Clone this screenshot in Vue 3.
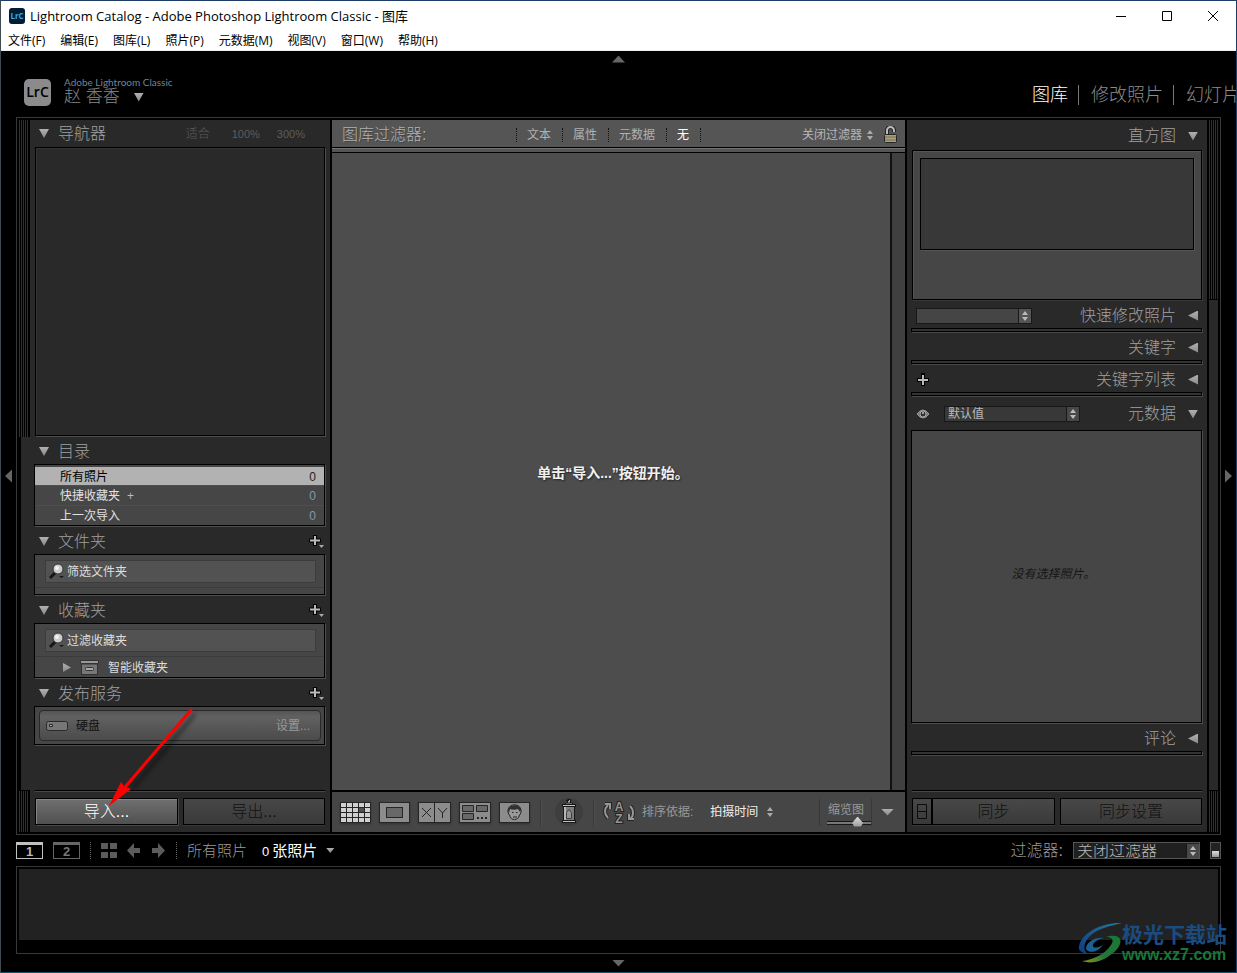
<script setup>
import { ref } from 'vue'

const menus = ['文件(F)', '编辑(E)', '图库(L)', '照片(P)', '元数据(M)', '视图(V)', '窗口(W)', '帮助(H)']
const modules = ['图库', '修改照片', '幻灯片']
const catalog = [
  { name: '所有照片', count: 0 },
  { name: '快捷收藏夹', plus: true, count: 0 },
  { name: '上一次导入', count: 0 }
]
const filters = ['文本', '属性', '元数据', '无']
const collapsed = [
  { title: '快速修改照片', kind: 'preset' },
  { title: '关键字', kind: 'plain' },
  { title: '关键字列表', kind: 'add' }
]
const selected = ref(0)
const activeFilter = ref(3)
const thumb = ref(76)
const folderQuery = ref('')
const collectionQuery = ref('')
</script>

<template>
  <div class="window">
    <header class="titlebar">
      <span class="appicon">LrC</span>
      <h1>Lightroom Catalog - Adobe Photoshop Lightroom Classic - 图库</h1>
      <div class="controls">
        <button aria-label="最小化"><svg width="10" height="10"><path d="M0 5.500h10" /></svg></button>
        <button aria-label="最大化"><svg width="10" height="10"><path d="M.5.5h9v9h-9z" /></svg></button>
        <button aria-label="关闭"><svg width="10" height="10"><path d="M0 0l10 10M10 0L0 10" /></svg></button>
      </div>
    </header>
    <nav class="menubar">
      <button v-for="m in menus" :key="m">{{ m }}</button>
    </nav>

    <div class="identity">
      <button class="edge top" aria-label="隐藏模块选取器"><i class="tri up"></i></button>
      <span class="logo">LrC</span>
      <div class="user">
        <span class="product">Adobe Lightroom Classic</span>
        <button class="name">赵 香香 <i class="tri down"></i></button>
      </div>
      <nav class="modules">
        <a v-for="(m, i) in modules" :key="m" href="#" :class="{ on: i === 0 }">{{ m }}</a>
      </nav>
    </div>

    <div class="middle">
      <button class="side" aria-label="隐藏左侧面板"><i class="tri left"></i></button>
      <main class="frame">
        <aside class="column">
          <div class="gutter lefty"><i class="stripes a"></i><i class="mid"></i><i class="stripes c"></i></div>
          <div class="panel">
            <h2 class="head nav"><i class="tri down"></i><span>导航器</span>
              <span class="zooms"><button>适合</button><button>100%</button><button>300%</button></span>
            </h2>
            <div class="box preview"></div>

            <h2 class="head"><i class="tri down"></i><span>目录</span></h2>
            <ul class="box catalog">
              <li v-for="(c, i) in catalog" :key="c.name">
                <button :class="{ on: i === selected }" @click="selected = i">
                  <span>{{ c.name }}<b v-if="c.plus">+</b></span><em>{{ c.count }}</em>
                </button>
              </li>
            </ul>

            <h2 class="head"><i class="tri down"></i><span>文件夹</span>
              <button class="plus" aria-label="添加文件夹"><svg width="16" height="16"><path class="ol" d="M6 1v11M0 6.500h12" /><path class="in" d="M6 2v9M1 6.500h10" /><path class="fl" d="M10 11h5l-2.500 3z" /></svg></button>
            </h2>
            <div class="box folders">
              <label class="search">
                <svg width="18" height="18"><path d="M2 15l6-6" stroke="#161616" stroke-width="3" /><circle cx="10" cy="6" r="5" fill="#ccc" stroke="#333" /><circle cx="9" cy="5" r="2" fill="#f4f4f4" /><path d="M11 13h5l-2.500 2z" fill="#161616" /></svg>
                <input v-model="folderQuery" type="text" placeholder="筛选文件夹" aria-label="筛选文件夹">
              </label>
            </div>

            <h2 class="head"><i class="tri down"></i><span>收藏夹</span>
              <button class="plus" aria-label="添加收藏夹"><svg width="16" height="16"><path class="ol" d="M6 1v11M0 6.500h12" /><path class="in" d="M6 2v9M1 6.500h10" /><path class="fl" d="M10 11h5l-2.500 3z" /></svg></button>
            </h2>
            <div class="box collections">
              <label class="search">
                <svg width="18" height="18"><path d="M2 15l6-6" stroke="#161616" stroke-width="3" /><circle cx="10" cy="6" r="5" fill="#ccc" stroke="#333" /><circle cx="9" cy="5" r="2" fill="#f4f4f4" /><path d="M11 13h5l-2.500 2z" fill="#161616" /></svg>
                <input v-model="collectionQuery" type="text" placeholder="过滤收藏夹" aria-label="过滤收藏夹">
              </label>
              <button class="smart">
                <i class="tri right"></i>
                <svg width="19" height="15"><path d="M1.500 4h16v10.500h-16z" fill="#777" stroke="#333" /><path d="M.5.5h18v3h-18z" fill="#999" stroke="#333" /><rect x="5.500" y="7.500" width="8" height="3" rx="1" fill="#aaa" stroke="#333" /></svg>
                <span>智能收藏夹</span>
              </button>
            </div>

            <h2 class="head"><i class="tri down"></i><span>发布服务</span>
              <button class="plus" aria-label="添加发布服务"><svg width="16" height="16"><path class="ol" d="M6 1v11M0 6.500h12" /><path class="in" d="M6 2v9M1 6.500h10" /><path class="fl" d="M10 11h5l-2.500 3z" /></svg></button>
            </h2>
            <div class="box publish">
              <button class="disk">
                <svg width="22" height="10"><rect x=".5" y=".5" width="21" height="9" rx="2" fill="#777" stroke="#2a2a2a" /><path d="M3.500 3.500h3v2h-3z" fill="#aaa" stroke="#2a2a2a" /></svg>
                <span>硬盘</span><em>设置...</em>
              </button>
            </div>

            <footer class="actions">
              <button class="import">导入...</button>
              <button disabled>导出...</button>
            </footer>
          </div>
        </aside>

        <section class="center">
          <div class="filterbar">
            <h2>图库过滤器:</h2>
            <div class="tabs">
              <button v-for="(f, i) in filters" :key="f" :class="{ on: i === activeFilter }" @click="activeFilter = i">{{ f }}</button>
            </div>
            <label class="pick off">
              <select aria-label="过滤器预设"><option>关闭过滤器</option></select>
              <svg width="8" height="10"><path d="M1 4l3-4 3 4zM1 6l3 4 3-4z" /></svg>
            </label>
            <button class="lock" aria-label="锁定过滤器">
              <svg width="16" height="18"><path d="M4 9V4.500a3.500 3.500 0 0 1 7 0V6" fill="none" stroke="#222" stroke-width="4" /><path d="M4 9V4.500a3.500 3.500 0 0 1 7 0V6" fill="none" stroke="#bbb" stroke-width="2" /><rect x="1.500" y="8.500" width="12" height="8" rx="1" fill="#aaa17c" stroke="#252525" /><path d="M2 11h11M2 14h11" stroke="#746e57" /></svg>
            </button>
          </div>
          <div class="stage">
            <p>单击“导入...”按钮开始。</p>
            <i class="scroll"></i>
          </div>
          <div class="toolbar">
            <button class="view" aria-label="网格视图">
              <svg width="31" height="21"><path fill="#252525" d="M0 0h31v21H0z" /><path d="M1 3h29M1 8h29M1 13h29M1 18h29" stroke="#d0d0d0" stroke-width="4" stroke-dasharray="5 1" /><path d="M19 6h5v4h-5z" fill="#505050" /></svg>
            </button>
            <button class="view" aria-label="放大视图">
              <svg width="31" height="21"><rect class="tile" x=".5" y=".5" width="30" height="20" /><rect x="7.500" y="5.500" width="16" height="10" fill="#686868" stroke="#252525" /></svg>
            </button>
            <button class="view" aria-label="比较视图">
              <svg width="33" height="21"><rect class="tile" x=".5" y=".5" width="32" height="20" /><path d="M16.500 0v21M4 6l9 9M13 6l-9 9M20 6l4.500 5 4.500-5M24.500 11v5" fill="none" stroke="#252525" /></svg>
            </button>
            <button class="view" aria-label="筛选视图">
              <svg width="32" height="21"><rect class="tile" x=".5" y=".5" width="31" height="20" /><path d="M3.500 3.500h11v6h-11zM17.500 3.500h11v6h-11zM3.500 11.500h11v6h-11z" fill="#686868" stroke="#252525" /><path d="M18 16h10" stroke="#252525" stroke-width="2" stroke-dasharray="2 2" /></svg>
            </button>
            <button class="view" aria-label="人物视图">
              <svg width="31" height="21"><rect class="tile" x=".5" y=".5" width="30" height="20" /><path d="M9 8c1-7 12-7 13 0 .5 2-.5 4-1.500 5-1 6-9 6-10 0-1-1-2-3-1.500-5z" fill="#999" stroke="#252525" /><path d="M9 9c0-7 12-8 13-1l-1 2-2-3c-3 1-6 1-8 0l-1 4z" fill="#303030" /><path d="M13 10.500h1.500M17 10.500h1.500M14 15h4" stroke="#252525" fill="none" /></svg>
            </button>
            <i class="rule r1"></i>
            <button class="spray" aria-label="喷涂">
              <svg width="30" height="30"><circle cx="15" cy="15" r="14" fill="#3e3e3e" /><path d="M13.500 2.500h3v4h-3z" fill="#aaa" stroke="#151515" /><path d="M12 3.500h3" stroke="#151515" /><path d="M10.500 9q0-3 2-3h5q2 0 2 3z" fill="#aaa" stroke="#181818" /><path d="M9.500 9.500h11v15h-11z" fill="#7c7c7c" stroke="#181818" /><path d="M11 10v14" stroke="#b4b4b4" stroke-width="2" /><path d="M8 8.500h14M8 24.500h14" stroke="#181818" stroke-width="3" /><path d="M9 8.500h12M9 24.500h12" stroke="#c0c0c0" /><path d="M12.500 21.500v-6l2.500-3 2.500 3v6z" fill="#929292" stroke="#404040" /></svg>
            </button>
            <i class="rule r2"></i>
            <button class="sort" aria-label="排序方向">
              <svg width="32" height="28">
                <path d="M5 20C1 16 1 11 5 7M2 6h5v5M27 21c4-3 4-9 0-13M31 21h-5v-5" class="so" />
                <path d="M5 20C1 16 1 11 5 7M2 6h5v5M27 21c4-3 4-9 0-13M31 21h-5v-5" class="si" />
                <text x="16" y="13">A</text><text x="16" y="25">Z</text>
              </svg>
            </button>
            <label class="pick sortby"><span>排序依据:</span>
              <select><option>拍摄时间</option></select>
              <svg width="8" height="10"><path d="M1 4l3-4 3 4zM1 6l3 4 3-4z" /></svg>
            </label>
            <label class="thumbs"><span>缩览图</span><input v-model="thumb" type="range" min="0" max="100"></label>
            <button class="more" aria-label="工具栏选项"><i class="tri wide"></i></button>
          </div>
        </section>

        <aside class="column">
          <div class="panel righty">
            <h2 class="head hist"><i class="tri down"></i><span>直方图</span></h2>
            <div class="box histogram"><div></div></div>
            <template v-for="c in collapsed" :key="c.title">
              <h2 class="head">
                <i class="tri left"></i><span>{{ c.title }}</span>
                <label v-if="c.kind === 'preset'" class="drop preset"><select aria-label="存储的预设"><option></option></select><svg width="13" height="14"><path d="M3 6l3-4 3 4zM3 8l3 4 3-4z" /></svg></label>
                <button v-if="c.kind === 'add'" class="add" aria-label="添加关键字"><svg width="13" height="13"><path class="ol" d="M7 0v13M1 7h12" /><path class="in" d="M7 2v10M2 7h10" /></svg></button>
              </h2>
              <i class="bar"></i>
            </template>
            <h2 class="head meta"><i class="tri down"></i><span>元数据</span>
              <label class="drop metaset"><select aria-label="元数据预设"><option>默认值</option></select><svg width="13" height="14"><path d="M3 6l3-4 3 4zM3 8l3 4 3-4z" /></svg></label>
              <button class="eye" aria-label="显示元数据"><svg width="14" height="12"><path d="M1 6q6-8 12 0-6 8-12 0z" fill="#777" stroke="#999" /><circle cx="7" cy="6" r="3" fill="#333" stroke="#aaa" /><circle cx="7" cy="5" r="1" fill="#bbb" /></svg></button>
            </h2>
            <div class="box metadata"><p>没有选择照片。</p></div>
            <h2 class="head"><i class="tri left"></i><span>评论</span></h2>
            <i class="bar"></i>
            <footer class="actions">
              <div class="pair">
                <button disabled aria-label="自动同步开关"><svg width="10" height="15"><path d="M.5.5h9v14h-9zM.5 7.500h9" fill="none" stroke="#0c0c0c" /></svg></button>
                <button disabled>同步</button>
              </div>
              <button disabled>同步设置</button>
            </footer>
          </div>
          <div class="gutter"><i class="stripes b"></i><i class="mid"></i><i class="stripes c"></i></div>
        </aside>
      </main>
      <button class="side" aria-label="隐藏右侧面板"><i class="tri goright"></i></button>
    </div>

    <div class="stripbar">
      <button class="monitor on">1</button>
      <button class="monitor">2</button>
      <i class="dots"></i>
      <button aria-label="返回网格"><svg width="16" height="16"><path d="M0 0h7v6H0zM9 0h7v6H9zM0 9h7v6H0zM9 9h7v6H9z" /></svg></button>
      <button class="back" aria-label="后退"><svg width="14" height="16"><path d="M0 7.500L7 0v5h6v5H7v5z" /></svg></button>
      <button class="back" aria-label="前进"><svg width="14" height="16"><path d="M14 7.500L7 0v5H1v5h6v5z" /></svg></button>
      <i class="dots"></i>
      <button class="source"><span>所有照片</span><b><small>0</small>张照片</b><i class="tri tiny"></i></button>
      <label class="stripfilter"><span>过滤器:</span>
        <span class="drop dark"><select><option>关闭过滤器</option></select><svg width="13" height="14"><path d="M3 6l3-4 3 4zM3 8l3 4 3-4z" /></svg></span>
      </label>
      <button class="switch" aria-label="开关过滤器"><i></i></button>
    </div>
    <div class="filmstrip"><div></div></div>
    <button class="edge bottom" aria-label="隐藏胶片显示窗格"><i class="tri wide"></i></button>

    <svg class="pointer" width="110" height="120" viewBox="0 0 110 120">
      <path class="shade" d="M95 14L32 89" />
      <path d="M91 10L26 86" fill="none" stroke="#f00" stroke-width="3" stroke-linecap="round" />
      <path d="M9 106l12-24 3 4 7 3z" fill="#f00" />
    </svg>

    <div class="watermark">
      <svg width="44" height="42" viewBox="0 0 44 42">
        <defs>
          <linearGradient id="wb" x1="1" y1="0" x2="0" y2="1"><stop offset="0" stop-color="#217b9d" /><stop offset="1" stop-color="#113a80" /></linearGradient>
          <linearGradient id="wg" x1="1" y1="0" x2="0" y2="1"><stop offset="0" stop-color="#187a35" /><stop offset=".6" stop-color="#25733b" /><stop offset="1" stop-color="#91941a" /></linearGradient>
        </defs>
        <path d="M44 1C25 0 4 10 1 24c-1 5 3 7 9 8C4 28 6 20 12 14 20 6 33 4 44 1z" fill="url(#wb)" />
        <path d="M26 16c-9-1-17 4-18 10 0 5 11 6 17-3-3 2-9 4-10 1s5-7 11-8z" fill="#1a6094" />
        <path d="M28 15c5 0 9 2 5 8C27 32 15 38 4 39c8 3 19 1 27-5 8-5 13-12 11-17-2-4-8-4-14-2z" fill="url(#wg)" />
      </svg>
      <div><strong>极光下载站</strong><span>www.xz7.com</span></div>
    </div>
  </div>
</template>

<style>
html, body { margin: 0; background: #000; }
</style>

<style scoped>
* { box-sizing: border-box; }
button, select, input { font: inherit; color: inherit; background: none; border: 0; padding: 0; margin: 0; border-radius: 0; outline: 0; }
button { display: flex; align-items: center; }
h1, h2, p, ul { margin: 0; padding: 0; font-weight: 400; list-style: none; }
i { display: block; flex: none; }
em { font-style: normal; }
svg { display: block; flex: none; }
select { appearance: none; cursor: default; }

.window {
  position: relative; display: flex; flex-direction: column; min-height: 100vh; overflow: hidden;
  background: #000; border: 1px solid #1d3e68; border-left-color: #424a52; border-bottom-color: #15506f;
  font: 12px/16px "Liberation Sans", "Noto Sans CJK SC", sans-serif; color: #999;
}
.titlebar { display: flex; align-items: center; height: 29px; padding-left: 8px; background: #fff; color: #000; }
.titlebar h1 { font: 13px/16px "Open Sans", "Noto Sans CJK SC", sans-serif; }
.appicon { width: 16px; height: 16px; margin-right: 5px; border-radius: 3px; background: #001d34; color: #36a5f5; font: 700 8px/15px "Open Sans", sans-serif; text-align: center; }
.controls { display: flex; margin-left: auto; }
.controls button { width: 46px; height: 28px; justify-content: center; }
.controls path { fill: none; stroke: #000; }
.menubar { display: flex; gap: 15px; height: 21px; padding: 2px 0 0 7px; background: #fff; border-bottom: 1px solid #eee; color: #000; font: 12px/16px "Open Sans", "Noto Sans CJK SC", sans-serif; }

.tri { width: 10px; height: 9px; background: linear-gradient(#b0b0b0, #888); }
.down { clip-path: polygon(0 0, 100% 0, 50% 100%); }
.wide { width: 13px; height: 7px; clip-path: polygon(0 0, 100% 0, 50% 100%); }
.tiny { width: 8px; height: 5px; clip-path: polygon(0 0, 100% 0, 50% 100%); }
.up { width: 13px; height: 7px; clip-path: polygon(50% 0, 100% 100%, 0 100%); background: #666; }
.left { clip-path: polygon(100% 0, 100% 100%, 0 50%); height: 10px; }
.right { width: 8px; clip-path: polygon(0 0, 100% 50%, 0 100%); }
.goright { width: 7px; height: 13px; clip-path: polygon(0 0, 100% 50%, 0 100%); background: #666; }
.side .left { width: 7px; height: 13px; background: #666; }
.edge { justify-content: center; }
.edge.top { position: absolute; inset: 0 0 auto; width: 100%; height: 16px; }
.edge.bottom { height: 18px; flex: none; }
.edge.bottom .tri { background: #666; }

.identity { position: relative; display: flex; align-items: flex-start; height: 66px; flex: none; padding: 24px 0 0 23px; }
.logo { width: 27px; height: 27px; margin-top: 4px; border-radius: 5px; background: #8b8b8b; color: #000; font: 600 14px/25px "Open Sans", sans-serif; text-align: center; }
.user { margin-left: 13px; }
.product { display: block; font: 10px/12px Lato, sans-serif; color: #708496; margin-top: 1px; }
.name { font-size: 17px; line-height: 18px; font-weight: 300; gap: 14px; color: #8a8a8a; }
.modules { flex: 0 0 204px; margin-left: auto; display: flex; overflow: hidden; white-space: nowrap; font-size: 18px; line-height: 20px; font-weight: 300; padding-top: 10px; }
.modules a { flex: none; color: #8c8c8c; text-decoration: none; padding-right: 10px; margin-right: 12px; border-right: 1px solid #777; }
.modules .on { color: #fff; }

.middle { display: flex; flex: 1; }
.side { width: 15px; flex: none; justify-content: center; }
.frame { display: flex; flex: 1; min-width: 0; gap: 2px; padding: 2px; border: 1px solid #383838; }
.column { display: flex; width: 311px; flex: none; gap: 2px; background: #000; }
.gutter { display: flex; flex-direction: column; width: 9px; flex: none; }
.stripes { background: repeating-linear-gradient(90deg, #303030 0 1px, #000 1px 2px); }
.a { height: 317px; } .b { height: 180px; border-bottom: 1px solid #000; } .c { height: 42px; border-top: 1px solid #000; }
.mid { flex: 1; background: #292929; }
.lefty .mid { margin: 0 -2px 0 2px; }
.panel { display: flex; flex-direction: column; flex: 1; min-width: 0; padding: 0 5px; background: #292929; }
.head { display: flex; align-items: center; flex: none; height: 28px; padding: 3px 0 0 4px; font-size: 16px; line-height: 20px; font-weight: 300; color: #a0a0a0; }
.head > .tri + span { margin-left: 9px; }
.head.nav { height: 27px; padding-top: 0; }
.zooms { display: flex; gap: 17px; margin-left: auto; padding-right: 20px; font-size: 11px; color: #5c5c5c; }
.zooms button:first-child { margin-right: 5px; font-size: 12px; }
.box { border: 1px solid #000; background: #464646; box-shadow: 1px 1px #4d4d4d; flex: none; }
.head + .box { margin-left: -1px; }
.head + .box.preview, .head + .box.histogram { margin-left: 0; }
.preview { height: 289px; background: #292929; box-shadow: inset 1px 1px #333, 1px 1px #4d4d4d; }
.catalog { height: 62px; color: #e2e2e2; padding-top: 2px; }
.catalog button { width: 100%; height: 20px; padding: 2px 8px 0 25px; text-align: left; justify-content: space-between; }
.catalog li + li { box-shadow: inset 0 1px #4e4e4e; }
.catalog b { font-weight: 400; margin-left: 7px; color: #bbb; }
.catalog em { color: #8796a8; }
.catalog .on { background: #b2b2b2; color: #000; height: 18px; }
.catalog .on em { color: #222; }
.plus { margin-left: auto; }
.ol { fill: none; stroke: #000; stroke-width: 4; }
.in { fill: none; stroke: #bbb; stroke-width: 2; }
.fl { fill: #aaa; }
.folders { height: 41px; padding: 5px 8px 0 10px; background: linear-gradient(#464646 32px, #3b3b3b 32px 33px, #464646 33px); }
.collections { height: 55px; padding: 5px 8px 0 10px; background: linear-gradient(#464646 32px, #3b3b3b 32px 33px, #464646 33px); }
.search { display: flex; align-items: center; height: 23px; padding-left: 2px; background: #525252; border: 1px solid #3c3c3c; }
.search input { flex: 1; min-width: 0; height: 20px; margin-left: 1px; color: #ddd; }
.search input::placeholder { color: #ddd; opacity: 1; }
.smart { width: 100%; height: 21px; margin-top: 5px; padding-left: 18px; color: #ddd; }
.smart svg { margin: 0 9px; }
.publish { height: 39px; padding: 3px 3px 3px 4px; }
.disk { width: 100%; height: 31px; padding: 0 10px 0 6px; border: 1px solid #292929; border-radius: 4px; background: linear-gradient(#555, #616161 20%, #4b4b4b); color: #111; }
.disk span { margin-left: 8px; }
.disk em { margin-left: auto; color: #999; }
.actions { display: grid; grid-template-columns: 143px 1fr; gap: 5px; margin-top: auto; height: 42px; padding: 7px 0 8px; border-top: 1px solid #000; box-shadow: inset 0 1px #484848; flex: none; font-size: 16px; font-weight: 300; }
.actions button { height: 27px; justify-content: center; border: 1px solid #000; background: linear-gradient(#484848, #393939); color: #111; box-shadow: 0 1px #383838; }
.actions .import { background: linear-gradient(#707070, #505050); color: #fff; box-shadow: inset 1px 1px #858585, 1px 1px #484848; }
.pair { display: grid; grid-template-columns: 20px 1fr; }

.center { display: flex; flex-direction: column; flex: 1; min-width: 0; background: #4d4d4d; }
.filterbar { display: flex; align-items: center; height: 33px; flex: none; padding: 0 6px 4px 10px; background: linear-gradient(#555 27px, #000 27px 28px, #747474 28px 29px, #555 29px 32px, #000 32px); }
.filterbar h2 { flex: none; width: 174px; font-size: 16px; font-weight: 300; color: #b0b0b0; text-shadow: 1px 1px #444; }
.tabs { display: flex; border-left: 1px dotted #111; height: 14px; color: #b0b0b0; }
.tabs button { padding: 0 11px 0 10px; height: 14px; border-right: 1px dotted #111; white-space: nowrap; }
.tabs .on { color: #fff; }
.pick { display: flex; align-items: center; white-space: nowrap; }
.pick svg, .drop svg { fill: #aaa; margin-left: 3px; }
.off { margin-left: auto; color: #b5b5b5; }
.lock { margin-left: 9px; }
.stage { display: flex; flex: 1; align-items: center; }
.stage p { flex: 1; padding: 2px 0 0 4px; text-align: center; font-size: 14px; line-height: 20px; font-weight: 700; color: #f0f0f0; text-shadow: 1px 1px 2px #222; }
.scroll { align-self: stretch; width: 15px; border-left: 2px solid #111; background: #404040; }
.toolbar { display: flex; align-items: center; height: 42px; flex: none; padding: 0 11px 0 8px; border-top: 2px solid #000; background: #464646; }
.view { margin-right: 8px; box-shadow: 0 1px 2px #333; }
.tile { fill: #8c8c8c; stroke: #252525; }
.rule { width: 2px; height: 27px; background: #383838; border-right: 1px solid #4e4e4e; }
.r1 { margin: 0 12px 0 2px; }
.r2 { margin: 0 8px 0 9px; }
.so { fill: none; stroke: #262626; stroke-width: 4; }
.si { fill: none; stroke: #969696; stroke-width: 2; }
.sort text { font: 700 12px/12px "Liberation Sans", sans-serif; text-anchor: middle; fill: #959595; stroke: #222; stroke-width: 2; paint-order: stroke; }
.sortby { margin-left: 7px; }
.sortby select { margin-left: 17px; color: #eee; }
.sortby svg { margin-left: 7px; }
.thumbs { display: flex; flex-direction: column; margin-left: auto; height: 27px; padding: 5px 0 0 7px; border: solid #383838; border-width: 0 1px; line-height: 13px; }
.thumbs span { margin-left: 1px; height: 13px; }
.thumbs input { appearance: none; width: 44px; height: 12px; background: linear-gradient(transparent 4px, #171717 4px 5px, #777 5px 7px, #171717 7px 8px, transparent 8px); }
.thumbs input::-webkit-slider-thumb { appearance: none; width: 11px; height: 10px; background: linear-gradient(#ddd, #999); clip-path: polygon(50% 0, 100% 65%, 80% 100%, 20% 100%, 0 65%); }
.more { margin-left: 9px; }

.righty .head { flex-direction: row-reverse; padding: 3px 4px 0 4px; }
.righty .head > .tri + span { margin: 0 12px 0 0; }
.righty .hist { height: 30px; padding-top: 2px; }
.histogram { height: 150px; padding: 7px; box-shadow: inset 1px 1px #555, 1px 1px #383838; }
.histogram div { height: 92px; background: #383838; border: 1px solid #000; box-shadow: 1px 1px #555; }
.bar { height: 4px; border: 1px solid #000; background: #333; box-shadow: 1px 1px #484848; margin-left: -1px; }
.righty .meta { height: 34px; padding-top: 2px; }
.drop { display: flex; align-items: center; height: 16px; border: 1px solid #181818; background: #454545; font-size: 12px; line-height: 14px; font-weight: 400; color: #bbb; }
.drop select { flex: 1; min-width: 0; height: 14px; line-height: 14px; padding-left: 3px; }
.drop svg { margin: 0; background: #484848; border-left: 1px solid #181818; fill: #bbb; }
.preset { width: 116px; margin-right: auto; }
.preset svg { background: #555; }
.metaset { width: 136px; background: #383838; }
.righty .meta .eye { margin-right: 14px; }
.righty .meta > .tri + span { margin-right: 12px; margin-left: auto; }
.righty .add { margin-right: auto; }
.metadata { display: flex; flex: 1; align-items: center; justify-content: center; font-style: italic; color: #151515; }
.metadata p { padding: 0 6px 6px 0; font-size: 12px; }
.righty .bar:nth-last-child(2) { margin-bottom: 35px; }

.stripbar { display: flex; align-items: center; flex: none; height: 31px; padding: 0 15px; font-size: 15px; font-weight: 300; line-height: 18px; }
.stripbar > button > svg { fill: #5c5c5c; }
.monitor { width: 27px; height: 17px; margin-right: 10px; justify-content: center; border: 1px solid #666; border-top-width: 3px; font-size: 13px; line-height: 13px; font-weight: 700; color: #777; }
.monitor.on { border-color: #c0c0c0; color: #bbb; }
.dots { height: 17px; border-left: 1px dotted #666; margin-right: 10px; }
.back { margin-left: 10px; }
.back + .dots { margin-left: 11px; }
.source { white-space: nowrap; }
.source b { margin: 0 9px 0 15px; font-weight: 400; color: #fff; }
.source small { font: 13px/16px "Liberation Sans", sans-serif; margin-right: 3px; }
.stripfilter { display: flex; align-items: center; margin-left: auto; white-space: nowrap; font-size: 16px; }
.dark { width: 127px; height: 17px; margin-left: 10px; border: 1px solid #555; background: #202020; font-size: 16px; font-weight: 300; }
.dark select { height: 16px; }
.switch { width: 11px; height: 17px; margin-left: 10px; border: 1px solid #555; background: #222; align-items: flex-end; }
.switch i { width: 7px; height: 6px; margin: 0 1px 1px; background: linear-gradient(#ddd, #999); }
.filmstrip { flex: none; height: 88px; margin: 0 15px; padding: 2px 2px 13px; border: 1px solid #383838; }
.filmstrip div { height: 71px; background: #222; }

.pointer { position: absolute; left: 99px; top: 699px; pointer-events: none; }
.shade { fill: none; stroke: #000; stroke-width: 4; opacity: .4; filter: blur(2px); }
.watermark { position: absolute; right: 9px; bottom: 7px; display: flex; align-items: center; pointer-events: none; }
.watermark strong { display: block; font: 700 21px/24px "Noto Sans CJK SC", sans-serif; color: #1a4c80; }
.watermark span { display: block; font: 700 16px/20px "Liberation Sans", sans-serif; color: #1c7538; }
</style>
